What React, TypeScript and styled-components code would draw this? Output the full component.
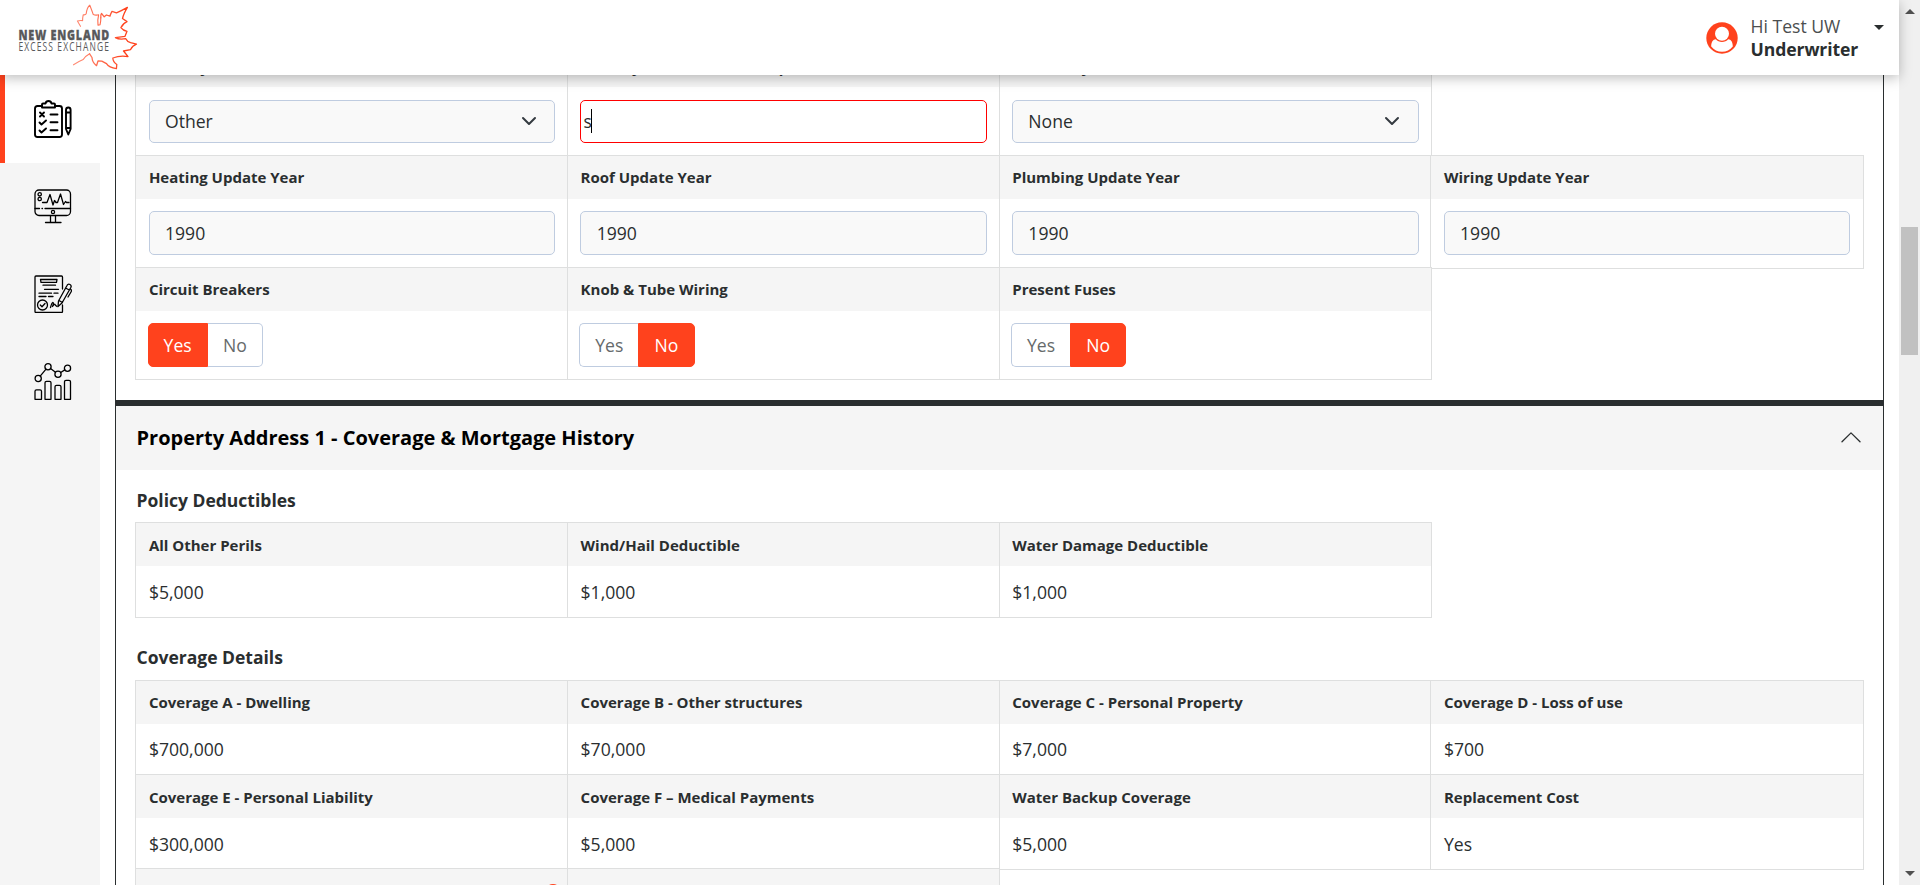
import React from "react";
import styled, { createGlobalStyle, css } from "styled-components";

const accent = "#ff421d";
const ink = "#2a2e2f";

const GlobalStyle = createGlobalStyle`
  *, *::before, *::after { box-sizing: border-box; }
  body {
    margin: 0;
    background: #fff;
    color: ${ink};
    font-family: "Open Sans", sans-serif;
    font-size: 17.6px;
    overflow: hidden;
  }
`;

const Shell = styled.div`
  display: flex;
  width: 1920px;
  height: 885px;
  overflow: hidden;
`;

const Page = styled.div`
  flex: 1;
  display: flex;
  flex-direction: column;
  min-width: 0;
`;

const TopBar = styled.header`
  position: relative;
  z-index: 2;
  flex: none;
  display: flex;
  justify-content: space-between;
  align-items: flex-start;
  height: 75px;
  background: #fff;
  box-shadow: 0 3px 12px rgba(0, 0, 0, 0.26);
`;

const UserMenu = styled.div`
  display: flex;
  padding: 15px 15px 0 0;
`;

const Avatar = styled.svg`
  margin: 7px 12.5px 0 0;
`;

const UserText = styled.div`
  width: 123.5px;
  line-height: 23px;
  white-space: nowrap;
`;

const Greeting = styled.div`
  color: #4b4e4f;
`;

const Role = styled.div`
  font-weight: 700;
  letter-spacing: -0.1px;
`;

const Caret = styled.span`
  height: 0;
  margin-top: 10px;
  border: 5px solid transparent;
  border-top-color: ${ink};
  border-bottom: 0;
`;

const Columns = styled.div`
  flex: 1;
  display: flex;
  min-height: 0;
`;

const SideNav = styled.nav`
  flex: none;
  width: 100px;
  background: #f5f5f5;
`;

const NavItem = styled.a<{ $active?: boolean }>`
  display: flex;
  align-items: center;
  justify-content: center;
  height: ${(p) => (p.$active ? 88 : 87.4)}px;
  border-left: 5px solid ${(p) => (p.$active ? accent : "transparent")};
  background: ${(p) => (p.$active ? "#fff" : "transparent")};
`;

const NavIcon = styled.svg<{ $weight?: number }>`
  width: 38px;
  height: 38px;
  fill: none;
  stroke: #000;
  stroke-width: ${(p) => p.$weight ?? 1.3};
  stroke-linecap: round;
  stroke-linejoin: round;
`;

const Panel = styled.main`
  flex: 1;
  margin: 0 15px;
  border: solid ${ink};
  border-width: 0 1px;
  overflow: hidden;
`;

const FieldGrid = styled.section<{ $rows: string; $scrolled?: boolean }>`
  display: grid;
  grid-template-columns: repeat(4, 431.7px);
  grid-template-rows: ${(p) => p.$rows};
  margin: ${(p) => (p.$scrolled ? "-31.55px" : "0")} 0 0 19.3px;
`;

const Cell = styled.div<{ $newRow?: boolean }>`
  display: flex;
  flex-direction: column;
  margin: 0 -1.6px -1.8px 0;
  padding-bottom: 0.8px;
  border: 1px solid #dedfdf;
  background: #fff;
  ${(p) => p.$newRow && css`grid-column-start: 1;`}
`;

const CellLabel = styled.div<{ $low?: boolean }>`
  flex: none;
  display: flex;
  align-items: center;
  height: 43px;
  padding: ${(p) => (p.$low ? "1.4px 7px 0 12.6px" : "0 7px 0.7px 12.6px")};
  background: #f5f5f5;
  font-size: 15px;
  font-weight: 700;
  white-space: nowrap;
`;

const CellBody = styled.div`
  flex: 1;
  display: flex;
  align-items: center;
  padding: 0 12.4px 0 12.4px;
`;

const ValueText = styled.span`
  padding: 0.35px 0 0 0.2px;
`;

const control = css`
  flex: 1;
  display: flex;
  align-items: center;
  border: 1px solid #bfcce0;
  border-radius: 5px;
  background: #f9f9f9;
  padding: 0 15.3px;
`;

const InputBox = styled.div`
  ${control}
  height: 43.6px;
`;

const SelectBox = styled.div`
  ${control}
  justify-content: space-between;
  height: 42.6px;
  padding-right: 17.5px;
`;

const InvalidBox = styled(SelectBox)`
  justify-content: flex-start;
  padding: 0 2px;
  border-color: #f00;
  background: #fff;
`;

const TextCursor = styled.span`
  width: 1px;
  height: 24px;
  margin: -1px 0 0 -0.6px;
  background: #000;
`;

const ToggleGroup = styled.div`
  display: flex;
  height: 44.1px;
  margin-left: -1.2px;
`;

const ToggleButton = styled.span<{ $on: boolean; $side: "left" | "right" }>`
  display: flex;
  align-items: center;
  padding: 0 15.1px;
  border: 1px solid ${(p) => (p.$on ? accent : "#bfcce0")};
  ${(p) => !p.$on && (p.$side === "left" ? "border-right: 0;" : "border-left: 0;")}
  border-radius: ${(p) => (p.$side === "left" ? "5px 0 0 5px" : "0 5px 5px 0")};
  background: ${(p) => (p.$on ? accent : "#fff")};
  color: ${(p) => (p.$on ? "#fff" : "#666a6b")};
`;

const SectionHeader = styled.div`
  display: flex;
  align-items: center;
  justify-content: space-between;
  height: 70px;
  margin-top: 21.6px;
  padding: 0 22px 0 20.5px;
  border-top: 6px solid ${ink};
  background: #f5f5f5;
  color: #000;
  font-size: 20px;
  font-weight: 700;
`;

const GroupTitle = styled.h3<{ $top: number; $bottom: number }>`
  margin: 0;
  padding: ${(p) => p.$top}px 0 ${(p) => p.$bottom}px 20.5px;
  font-size: 17.5px;
  font-weight: 700;
  line-height: 24px;
`;

const InfoDot = styled.i`
  align-self: flex-start;
  width: 16px;
  height: 16px;
  margin: 14.3px 0 0 auto;
  border-radius: 50%;
  background: ${accent};
`;

const ScrollTrack = styled.aside`
  flex: none;
  display: flex;
  flex-direction: column;
  align-items: center;
  width: 21px;
  padding: 9px 0;
  background: #f0f0f0;
`;

const ScrollArrow = styled.span<{ $down?: boolean }>`
  border: 5px solid transparent;
  ${(p) =>
    p.$down
      ? "border-top-color: #505050; border-bottom: 0; margin-top: auto;"
      : "border-bottom-color: #505050; border-top: 0;"}
`;

const ScrollThumb = styled.span`
  width: 17px;
  height: 128px;
  margin-top: 213px;
  background: #c1c1c1;
`;

const Logo = () => (
  <svg width="150" height="75" viewBox="0 0 150 75" fill="none">
    <defs>
      <linearGradient id="leaf" x1="75" y1="0" x2="125" y2="0" gradientUnits="userSpaceOnUse">
        <stop offset="0" stopColor="#ff8d76" />
        <stop offset="1" stopColor="#ff421d" />
      </linearGradient>
    </defs>
    <g stroke="url(#leaf)" strokeLinejoin="round" strokeLinecap="round">
      <path
        strokeWidth="1.1"
        d="M80.5 26.3 L77.4 21 Q79.5 20.3 82.6 20.6 Q82.6 17.6 83.2 14.8 Q85.4 15.2 86.2 13.8 Q87 7 89.8 5.2 Q91.5 9.5 93.3 14.6 Q95.8 15.6 98.6 14.8 Q97.4 19.5 98 25.2 L100 24.8 Q101 20.5 100.8 17.8"
      />
      <path
        strokeWidth="1.3"
        d="M100.800 17.800 Q100.600 14.400 101.500 13.400 L104.200 16.800 L106.400 15 L110 16.200 Q110.500 14 112 11.400 L116.500 12.800 Q122 10.500 127.400 7.400 Q123.500 14 122.500 18.500 L127 21.600 Q123.400 23 120.900 27.600 Q123 30.500 127 31.300 L125 36.300 L115.400 37.600 Q119 39.800 125.800 38.700 Q127 41.500 130.600 42.600 L136.500 44.200 Q132.400 45.600 130.600 49.600 L123.500 51 Q126 54 128 56.600 Q120 55.200 112.800 58 Q113 62 116.800 64.500 L116.400 68.700 Q109 67.500 106.500 63.600 L101.800 61.200 L98 61 L96.500 65.700 Q92.200 62.400 92 57.500 L89.600 53.800"
      />
      <path strokeWidth="1.1" d="M89.6 53.8 Q85.500 56 83.2 59.5 Q78.500 61.400 73.5 64.8" />
    </g>
    <text x="18.5" y="40.4" textLength="91.5" lengthAdjust="spacingAndGlyphs" letterSpacing="1" fontFamily="Open Sans, sans-serif" fontWeight="800" fontSize="14.4" fill="#58595b" stroke="#58595b" strokeWidth="0.3">
      NEW ENGLAND
    </text>
    <text x="18.5" y="51" textLength="91.500" lengthAdjust="spacingAndGlyphs" letterSpacing="1.6" fontFamily="Open Sans, sans-serif" fontWeight="500" fontSize="12.2" fill="#58595b">
      EXCESS EXCHANGE
    </text>
  </svg>
);

const ChecklistIcon = () => (
  <NavIcon viewBox="0 0 38 38" $weight={1.9}>
    <path d="M8 6H3.5Q1 6 1 8.500V34.500Q1 37 3.500 37H25.500Q28 37 28 34.500V8.500Q28 6 25.500 6H21" />
    <path d="M8 7.500V4.500Q8 3.500 9 3.500H11.500Q12 1 14.500 1T17.500 3.500H20Q21 3.500 21 4.500V7.500Z" />
    <path d="M6 12.500L10 16.500M10 12.500L6 16.500M16.500 14.500H23.500M5.500 22.500L7.500 24.500L12 20.500M16.500 22.300H23.500M5.500 30.500L7.500 32.500L12 28.500M16.500 30.300H23.500" />
    <path d="M32 10V29L34.300 34.500L36.600 29V10Q36.600 7.500 34.300 7.500T32 10ZM32 12.500H36.600M32 28H36.600" />
  </NavIcon>
);

const MonitorIcon = () => (
  <NavIcon viewBox="0 0 38 38">
    <rect x="1" y="2" width="35.500" height="25.500" rx="4" />
    <circle cx="5.700" cy="6.300" r="1.700" />
    <circle cx="5.700" cy="11" r="1.700" />
    <path d="M8.500 14.500H13L16 6.500L19 17L20.500 12.500L22 14.500H23.500L26.500 6L29.500 16.500L31.500 13.500L32.500 14.500H35M1 20.500H5.500M8 20.500H8.500M11 20.500H36.500M16.500 28V34M21.500 28V34M11.500 34.500H27" />
    <circle cx="19" cy="24" r="1.600" />
  </NavIcon>
);

const ContractIcon = () => (
  <NavIcon viewBox="0 0 38 38">
    <path d="M28.500 14V2Q28.500 1 27.500 1H2Q1 1 1 2V36.500Q1 37.500 2 37.500H27.500Q28.500 37.500 28.500 36.500V30" />
    <path d="M6.500 4.500H23L22.500 7.300H7ZM9 10.200H21.500M10.500 14.300H24.500M5 18.200H17.500M20 18.200H24M5 21.500H12M14.500 21.500H19" />
    <circle cx="8.500" cy="30" r="5" />
    <path d="M6.300 30L8 31.700L11 28.500M16.500 32.500Q18 27 19 27.500T18.500 31.500Q20.500 28.500 21 29.500T23 31.500" />
    <path d="M24.500 26L33 10.500Q34 8.500 36 9.500Q37.800 10.500 36.800 12.500L28 28L24 31.500ZM31.500 13L35.300 15M25 25.500L28.500 27.500M36.500 14Q38 15 37 17L34 22" />
  </NavIcon>
);

const ChartIcon = () => (
  <NavIcon viewBox="0 0 38 38">
    <circle cx="4.200" cy="16.500" r="3.100" />
    <circle cx="14" cy="4.700" r="3.100" />
    <circle cx="24" cy="12.200" r="3.100" />
    <circle cx="33.500" cy="6.200" r="3.100" />
    <path d="M6.200 14.100L12 7.200M16.500 6.600L21.500 10.300M26.700 10.500L30.800 7.900" />
    <path d="M1 37.300V29.300Q1 27.800 2.500 27.800H6Q7.500 27.800 7.500 29.300V37.300ZM11 37.300V20.800Q11 19.300 12.500 19.300H15.500Q17 19.300 17 20.800V37.300ZM21 37.300V24.800Q21 23.300 22.500 23.300H25.500Q27 23.300 27 24.800V37.300ZM30.500 37.300V19.800Q30.500 18.300 32 18.300H35Q36.500 18.300 36.500 19.800V37.300Z" />
  </NavIcon>
);

const ChevronDown = () => (
  <svg width="16" height="16" viewBox="0 0 16 16" fill="none" stroke="#343a40" strokeWidth="2" strokeLinecap="round" strokeLinejoin="round">
    <path d="M2 5l6 6 6-6" />
  </svg>
);

const ChevronUp = () => (
  <svg width="20" height="12" viewBox="0 0 20 12" fill="none" stroke={ink} strokeWidth="1.300" strokeLinecap="round" strokeLinejoin="round">
    <path d="M1 9.700L10 0.900L19 9.700" />
  </svg>
);

type FieldProps = {
  label?: string;
  newRow?: boolean;
  info?: boolean;
  low?: boolean;
  children?: React.ReactNode;
};

const Field = ({ label, newRow, info, low, children }: FieldProps) => (
  <Cell $newRow={newRow}>
    <CellLabel $low={low}>
      {label}
      {info && <InfoDot />}
    </CellLabel>
    <CellBody>{children}</CellBody>
  </Cell>
);

const Toggle = ({ value }: { value: "Yes" | "No" }) => (
  <ToggleGroup>
    <ToggleButton $side="left" $on={value === "Yes"}>Yes</ToggleButton>
    <ToggleButton $side="right" $on={value === "No"}>No</ToggleButton>
  </ToggleGroup>
);

const updateYears = ["Heating", "Roof", "Plumbing", "Wiring"];

const deductibles = [
  ["All Other Perils", "$5,000"],
  ["Wind/Hail Deductible", "$1,000"],
  ["Water Damage Deductible", "$1,000"],
];

const coverages = [
  ["Coverage A - Dwelling", "$700,000"],
  ["Coverage B - Other structures", "$70,000"],
  ["Coverage C - Personal Property", "$7,000"],
  ["Coverage D - Loss of use", "$700"],
  ["Coverage E - Personal Liability", "$300,000"],
  ["Coverage F – Medical Payments", "$5,000"],
  ["Water Backup Coverage", "$5,000"],
  ["Replacement Cost", "Yes"],
];

export default function App() {
  return (
    <Shell>
      <GlobalStyle />
      <Page>
        <TopBar>
          <Logo />
          <UserMenu>
            <Avatar width="32" height="32" viewBox="0 0 32 32">
              <circle cx="16" cy="16" r="15.700" fill={accent} />
              <circle cx="16" cy="11.700" r="7" fill="#fff" />
              <path d="M5.200 24.500C5 20.500 7 17.300 9.800 17.300C11.300 19 13.500 20 16 20S20.700 19 22.200 17.300C25 17.300 27 20.500 26.800 24.500C24 28 20.500 29.700 16 29.700S8 28 5.200 24.500Z" fill="#fff" />
            </Avatar>
            <UserText>
              <Greeting>Hi Test UW</Greeting>
              <Role>Underwriter</Role>
            </UserText>
            <Caret />
          </UserMenu>
        </TopBar>
        <Columns>
          <SideNav>
            <NavItem $active><ChecklistIcon /></NavItem>
            <NavItem><MonitorIcon /></NavItem>
            <NavItem><ContractIcon /></NavItem>
            <NavItem><ChartIcon /></NavItem>
          </SideNav>
          <Panel>
            <FieldGrid $scrolled $rows="111.75px 111.6px 111.6px">
              <Field low label="Primary Heat">
                <SelectBox>Other<ChevronDown /></SelectBox>
              </Field>
              <Field low label="Primary Heat Other Description">
                <InvalidBox>s<TextCursor /></InvalidBox>
              </Field>
              <Field low label="Secondary Heat">
                <SelectBox>None<ChevronDown /></SelectBox>
              </Field>
              {updateYears.map((name, i) => (
                <Field key={name} label={`${name} Update Year`} newRow={i === 0}>
                  <InputBox>1990</InputBox>
                </Field>
              ))}
              <Field label="Circuit Breakers" newRow><Toggle value="Yes" /></Field>
              <Field label="Knob &amp; Tube Wiring"><Toggle value="No" /></Field>
              <Field label="Present Fuses"><Toggle value="No" /></Field>
            </FieldGrid>

            <SectionHeader>
              Property Address 1 - Coverage &amp; Mortgage History
              <ChevronUp />
            </SectionHeader>

            <GroupTitle $top={18} $bottom={10.45}>Policy Deductibles</GroupTitle>
            <FieldGrid $rows="94.2px">
              {deductibles.map(([label, value]) => (
                <Field key={label} label={label}><ValueText>{value}</ValueText></Field>
              ))}
            </FieldGrid>

            <GroupTitle $top={28.4} $bottom={11.1}>Coverage Details</GroupTitle>
            <FieldGrid $rows="94.3px 94px 94.2px">
              {coverages.map(([label, value]) => (
                <Field key={label} label={label}><ValueText>{value}</ValueText></Field>
              ))}
              <Field info />
              <Field />
            </FieldGrid>
          </Panel>
        </Columns>
      </Page>
      <ScrollTrack>
        <ScrollArrow />
        <ScrollThumb />
        <ScrollArrow $down />
      </ScrollTrack>
    </Shell>
  );
}
